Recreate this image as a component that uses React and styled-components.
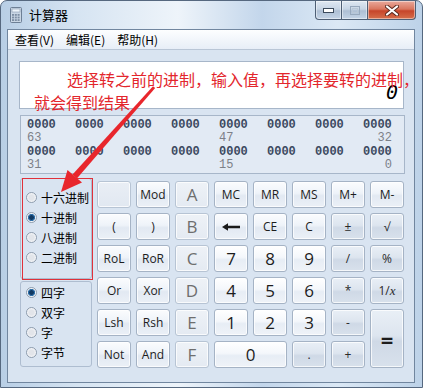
import React from 'react';
import styled, { createGlobalStyle, css } from 'styled-components';

const GlobalStyle = createGlobalStyle`
  html, body {
    margin: 0;
    padding: 0;
    background: #ffffff;
  }
  body {
    font-family: "Noto Sans CJK SC", "Noto Sans", sans-serif;
  }
`;

const Window = styled.div`
  position: relative;
  width: 423px;
  height: 388px;
  box-sizing: border-box;
  border: 1px solid #56687f;
  border-radius: 7px 7px 0 0;
  background: linear-gradient(90deg, #b8cee5 0%, #d6e4f2 18%, #eef4fa 42%, #c3d6eb 62%, #dbe8f5 80%, #bdd2e8 100%);
  display: flex;
  flex-direction: column;
  overflow: hidden;
`;

const TitleBar = styled.div`
  height: 28px;
  flex: none;
  display: flex;
  align-items: flex-start;
`;

const TitleIcon = styled.svg`
  margin: 6px 0 0 9px;
`;

const TitleText = styled.div`
  margin: 5px 0 0 7px;
  font-size: 13px;
  line-height: 17px;
  color: #000;
`;

const Controls = styled.div`
  margin-left: auto;
  margin-right: 6px;
  display: flex;
`;

const CtrlButton = styled.div`
  width: ${p => p.$w}px;
  height: 19px;
  box-sizing: border-box;
  border: 1px solid #4e5f75;
  border-top: none;
  border-left-width: ${p => (p.$first ? 1 : 0)}px;
  border-radius: ${p => (p.$first ? '0 0 0 4px' : p.$close ? '0 0 4px 0' : '0')};
  display: flex;
  align-items: center;
  justify-content: center;
  box-shadow: inset 0 0 0 1px rgba(255, 255, 255, 0.45);
  background: ${p =>
    p.$close
      ? 'linear-gradient(#e9a99c 0%, #d9765f 45%, #c7452a 55%, #d66f4b 100%)'
      : 'linear-gradient(#dfe8f2 0%, #c7d5e5 45%, #aebfd4 55%, #c4d4e6 100%)'};
`;

const Client = styled.div`
  flex: 1;
  margin: 0 7px 4px 6px;
  background: #d9e4f1;
  border: 1px solid #71869f;
  display: flex;
  flex-direction: column;
`;

const MenuBar = styled.div`
  height: 19px;
  flex: none;
  display: flex;
  align-items: center;
  padding-left: 1px;
  background: linear-gradient(#fdfeff, #e7eef7);
  border-bottom: 1px solid #b9c6d6;
`;

const MenuItem = styled.div`
  padding: 0 6px;
  font-size: 12px;
  line-height: 19px;
  color: #000;
`;

const Content = styled.div`
  padding: 11px 10px 0 11px;
  display: flex;
  flex-direction: column;
`;

const Display = styled.div`
  height: 48px;
  box-sizing: border-box;
  background: #ffffff;
  border: 1px solid #a7b6c9;
  display: flex;
  align-items: flex-end;
  justify-content: flex-end;
  padding: 0 5px 8px 0;
`;

const DisplayValue = styled.div`
  font-family: "DejaVu Sans Mono", "Liberation Mono", monospace;
  font-size: 20px;
  line-height: 16px;
  font-style: italic;
  color: #000;
`;

const BinaryPanel = styled.div`
  margin: 6px -1px 0 1px;
  height: 59px;
  box-sizing: border-box;
  border: 1px solid #a7b6c9;
  background: #e2eaf4;
  padding: 3px 0 0 6px;
  font-family: "Liberation Mono", "DejaVu Sans Mono", monospace;
  font-size: 12px;
  line-height: 13.3px;
`;

const BitRow = styled.div`
  display: grid;
  grid-template-columns: repeat(8, 29px);
  column-gap: 19px;
  color: ${p => (p.$label ? '#7c8088' : '#3b4960')};
  font-weight: ${p => (p.$label ? 400 : 700)};
`;

const BitLabel = styled.span`
  grid-column: ${p => p.$col};
  justify-self: ${p => (p.$end ? 'end' : 'start')};
`;

const Keypad = styled.div`
  margin-top: 4px;
  display: flex;
  gap: 5px;
  align-items: flex-start;
`;

const LeftColumn = styled.div`
  width: 72px;
  margin-left: 1px;
  display: flex;
  flex-direction: column;
  gap: 2px;
`;

const Group = styled.div`
  height: ${p => p.$h}px;
  box-sizing: border-box;
  border: 1px solid #aebdd0;
  border-radius: 3px;
  padding: ${p => p.$pt}px 0 0 5px;
`;

const RadioRow = styled.div`
  height: 20px;
  display: flex;
  align-items: center;
  gap: 4px;
  font-size: 12px;
  color: #000;
`;

const RadioDot = styled.span`
  width: 11px;
  height: 11px;
  box-sizing: border-box;
  border-radius: 50%;
  border: 1px solid #8e9cad;
  background: ${p =>
    p.$checked
      ? 'radial-gradient(circle, #123a63 0 2px, #2f6fa8 2.6px 3.4px, #f3f5f8 3.8px)'
      : 'radial-gradient(circle, #e2e5ea 0 2.5px, #f6f7f9 4.5px)'};
`;

const ButtonGrid = styled.div`
  margin-top: 3px;
  display: grid;
  grid-template-columns: repeat(8, 34px);
  grid-auto-rows: 27px;
  gap: 5px;
`;

const variants = {
  fn: css`
    background: linear-gradient(#fbfcfe 0%, #eef3f9 45%, #e2e9f2 55%, #ebf0f7 100%);
    color: #1d1d1d;
    font-size: 12px;
  `,
  num: css`
    background: linear-gradient(#ffffff 0%, #f4f7fb 45%, #e7edf5 55%, #eff3f8 100%);
    color: #1d1d1d;
    font-size: 17px;
  `,
  hex: css`
    background: linear-gradient(#eef2f7, #e4eaf2);
    border-color: #b7c4d4;
    color: #6e6e6e;
    font-size: 17px;
  `,
  op: css`
    background: linear-gradient(#e9eff6 0%, #dde5ef 45%, #cfd9e6 55%, #d8e1ec 100%);
    color: #2a2a2a;
    font-size: 12px;
  `,
  blank: css`
    background: linear-gradient(#e9eef5, #e1e8f1);
    border-color: #b7c4d4;
  `,
};

const Key = styled.div`
  grid-column: span ${p => p.$cols || 1};
  grid-row: span ${p => p.$rows || 1};
  box-sizing: border-box;
  border: 1px solid #a5b3c5;
  border-radius: 3px;
  box-shadow: inset 0 0 0 1px rgba(255, 255, 255, 0.75);
  display: flex;
  align-items: center;
  justify-content: center;
  font-family: "Open Sans", "Noto Sans", sans-serif;
  ${p => variants[p.$v]}
  ${p => p.$big && css`font-size: 22px; font-weight: 700; color: #1d1d1d;`}
`;

const Italic = styled.span`
  font-family: "Liberation Serif", serif;
  font-style: italic;
  font-size: 13px;
`;

const Annotation = styled.div`
  position: absolute;
  left: 33px;
  top: 67px;
  font-size: 16px;
  line-height: 23px;
  color: #e3262c;
  white-space: nowrap;
`;

const FirstLine = styled.div`
  padding-left: 33px;
`;

const Highlight = styled.div`
  position: absolute;
  left: 21px;
  top: 177px;
  width: 71px;
  height: 102px;
  box-sizing: border-box;
  border: 1px solid #e0313b;
`;

const ArrowLayer = styled.svg`
  position: absolute;
  left: 0;
  top: 0;
  pointer-events: none;
`;

const BackArrow = () => (
  <svg width="20" height="10" viewBox="0 0 20 10">
    <path d="M19 5H5" stroke="#1a1a1a" strokeWidth="2.6" />
    <path d="M1 5L7 1.2V8.8Z" fill="#1a1a1a" />
  </svg>
);

const keys = [
  { v: 'blank', label: '' },
  { v: 'fn', label: 'Mod' },
  { v: 'hex', label: 'A' },
  { v: 'fn', label: 'MC' },
  { v: 'fn', label: 'MR' },
  { v: 'fn', label: 'MS' },
  { v: 'fn', label: 'M+' },
  { v: 'fn', label: 'M-' },
  { v: 'fn', label: '(' },
  { v: 'fn', label: ')' },
  { v: 'hex', label: 'B' },
  { v: 'fn', label: <BackArrow /> },
  { v: 'fn', label: 'CE' },
  { v: 'fn', label: 'C' },
  { v: 'op', label: '±' },
  { v: 'op', label: '√' },
  { v: 'fn', label: 'RoL' },
  { v: 'fn', label: 'RoR' },
  { v: 'hex', label: 'C' },
  { v: 'num', label: '7' },
  { v: 'num', label: '8' },
  { v: 'num', label: '9' },
  { v: 'op', label: '/' },
  { v: 'op', label: '%' },
  { v: 'fn', label: 'Or' },
  { v: 'fn', label: 'Xor' },
  { v: 'hex', label: 'D' },
  { v: 'num', label: '4' },
  { v: 'num', label: '5' },
  { v: 'num', label: '6' },
  { v: 'op', label: '*' },
  { v: 'op', label: <span>1/<Italic>x</Italic></span> },
  { v: 'fn', label: 'Lsh' },
  { v: 'fn', label: 'Rsh' },
  { v: 'hex', label: 'E' },
  { v: 'num', label: '1' },
  { v: 'num', label: '2' },
  { v: 'num', label: '3' },
  { v: 'op', label: '-' },
  { v: 'op', label: '=', rows: 2, big: true },
  { v: 'fn', label: 'Not' },
  { v: 'fn', label: 'And' },
  { v: 'hex', label: 'F' },
  { v: 'num', label: '0', cols: 2 },
  { v: 'op', label: '.' },
  { v: 'op', label: '+' },
];

const bases = [
  { label: '十六进制' },
  { label: '十进制', checked: true },
  { label: '八进制' },
  { label: '二进制' },
];

const words = [
  { label: '四字', checked: true },
  { label: '双字' },
  { label: '字' },
  { label: '字节' },
];

const bits = Array.from({ length: 8 }, () => '0000');

export default function App() {
  return (
    <>
      <GlobalStyle />
      <Window>
        <TitleBar>
          <TitleIcon width="12" height="16" viewBox="0 0 12 16">
            <rect x="0.5" y="0.5" width="11" height="15" rx="1" fill="#c9d6e4" stroke="#6d7f95" />
            <rect x="2" y="2" width="8" height="3" fill="#eef5fb" stroke="#8798ad" strokeWidth="0.6" />
            {[0, 1, 2].map(r =>
              [0, 1, 2].map(c => (
                <rect key={`${r}-${c}`} x={2 + c * 2.8} y={7 + r * 2.6} width="2" height="1.8" fill="#7d8ea3" />
              ))
            )}
          </TitleIcon>
          <TitleText>计算器</TitleText>
          <Controls>
            <CtrlButton $w={27} $first>
              <svg width="11" height="5" viewBox="0 0 11 5">
                <rect x="0.5" y="0.5" width="10" height="4" fill="#fff" stroke="#3b4a5c" />
              </svg>
            </CtrlButton>
            <CtrlButton $w={26}>
              <svg width="10" height="9" viewBox="0 0 10 9">
                <rect x="0.5" y="0.5" width="9" height="8" fill="none" stroke="#98a9bd" />
                <rect x="2.5" y="2.5" width="5" height="4" fill="none" stroke="#b9c7d6" />
              </svg>
            </CtrlButton>
            <CtrlButton $w={48} $close>
              <svg width="14" height="11" viewBox="0 0 14 11">
                <path d="M2 1.5L12 9.5M12 1.5L2 9.5" stroke="#5a2a20" strokeWidth="4" strokeLinecap="round" />
                <path d="M2 1.5L12 9.5M12 1.5L2 9.5" stroke="#ffffff" strokeWidth="2.2" strokeLinecap="round" />
              </svg>
            </CtrlButton>
          </Controls>
        </TitleBar>
        <Client>
          <MenuBar>
            <MenuItem>查看(V)</MenuItem>
            <MenuItem>编辑(E)</MenuItem>
            <MenuItem>帮助(H)</MenuItem>
          </MenuBar>
          <Content>
            <Display>
              <DisplayValue>0</DisplayValue>
            </Display>
            <BinaryPanel>
              <BitRow>{bits.map((b, i) => <span key={i}>{b}</span>)}</BitRow>
              <BitRow $label>
                <BitLabel $col={1}>63</BitLabel>
                <BitLabel $col={5}>47</BitLabel>
                <BitLabel $col={8} $end>32</BitLabel>
              </BitRow>
              <BitRow>{bits.map((b, i) => <span key={i}>{b}</span>)}</BitRow>
              <BitRow $label>
                <BitLabel $col={1}>31</BitLabel>
                <BitLabel $col={5}>15</BitLabel>
                <BitLabel $col={8} $end>0</BitLabel>
              </BitRow>
            </BinaryPanel>
            <Keypad>
              <LeftColumn>
                <Group $h={101} $pt={8}>
                  {bases.map(r => (
                    <RadioRow key={r.label}>
                      <RadioDot $checked={r.checked} />
                      {r.label}
                    </RadioRow>
                  ))}
                </Group>
                <Group $h={86} $pt={0}>
                  {words.map(r => (
                    <RadioRow key={r.label}>
                      <RadioDot $checked={r.checked} />
                      {r.label}
                    </RadioRow>
                  ))}
                </Group>
              </LeftColumn>
              <ButtonGrid>
                {keys.map((k, i) => (
                  <Key key={i} $v={k.v} $cols={k.cols} $rows={k.rows} $big={k.big}>
                    {k.label}
                  </Key>
                ))}
              </ButtonGrid>
            </Keypad>
          </Content>
        </Client>

        <Annotation>
          <FirstLine>选择转之前的进制，输入值，再选择要转的进制，</FirstLine>
          <div>就会得到结果</div>
        </Annotation>
        <Highlight />
        <ArrowLayer width="423" height="388" viewBox="0 0 423 388">
          <polygon points="154.2,87 152,85.2 71.5,173.6 75.9,177.6" fill="#e8262c" />
          <polygon points="60,191 66.5,169 81,181.5" fill="#e8262c" />
        </ArrowLayer>
      </Window>
    </>
  );
}
